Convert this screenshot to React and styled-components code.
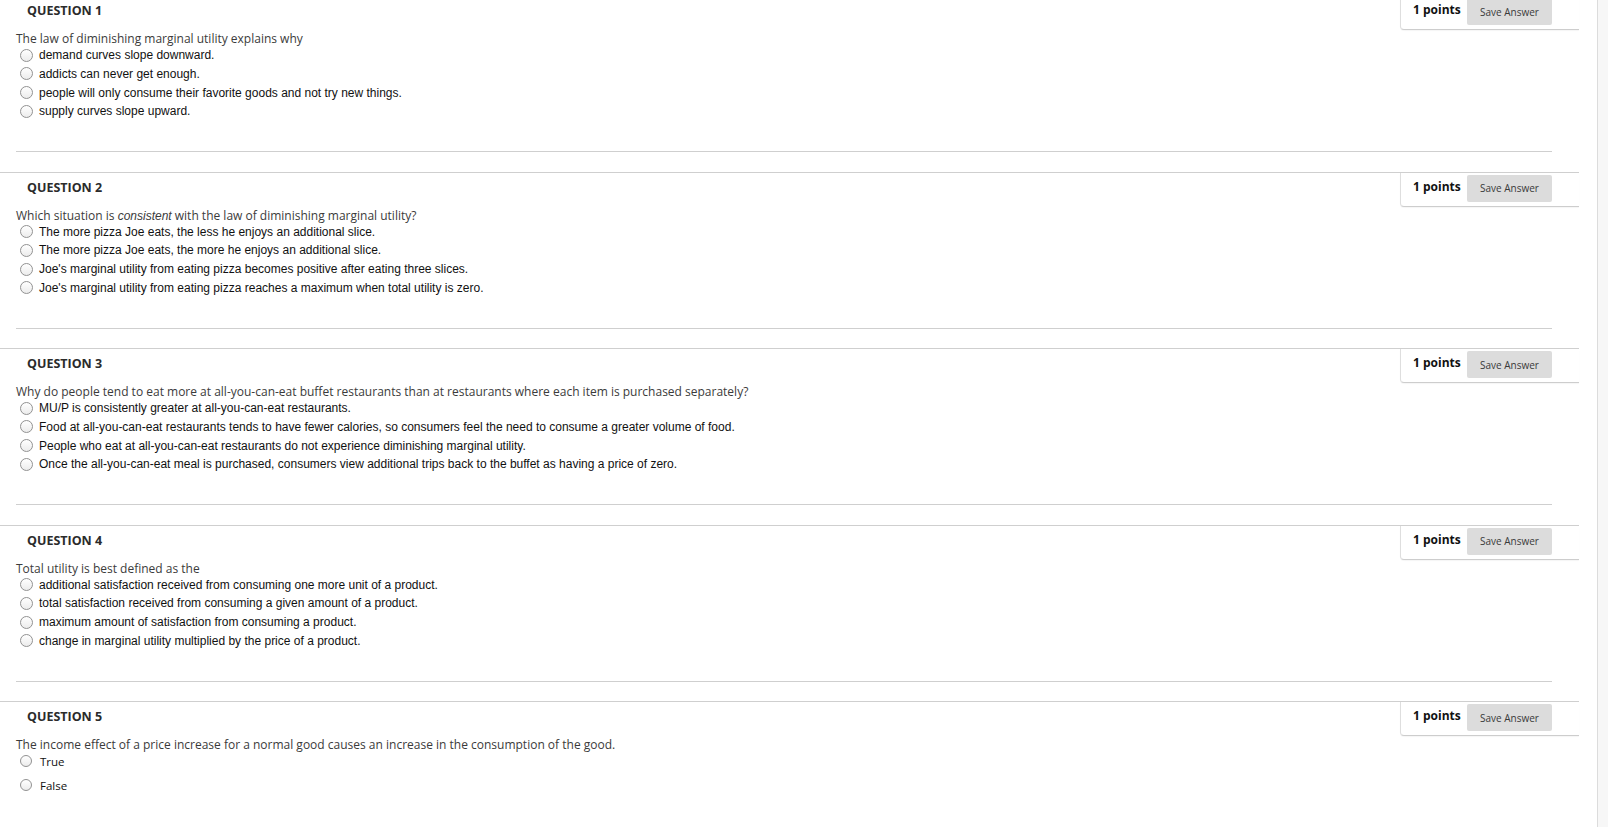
import styled, { createGlobalStyle } from "styled-components"

const Global = createGlobalStyle`
    html, body {
        margin: 0;
        padding: 0;
        background: #ffffff;
    }
    body {
        font-family: "Open Sans", "Liberation Sans", Arial, sans-serif;
        color: #333;
        overflow: hidden;
    }
`

const Pagina = styled.div`
    display: flex;
    min-height: 100vh;
`

const Contenido = styled.main`
    width: 1597px;
    flex: none;
    background: #fff;
    margin-top: -5px;
`

const Lateral = styled.aside`
    flex: 1;
    background: #f7f7f7;
    border-left: 1px solid #dcdcdc;
`

const Bloque = styled.section`
    display: flex;
    flex-direction: column;
`

const Cabecera = styled.div`
    width: 1579px;
    height: 35px;
    border-top: 1px solid #cfcfcf;
    display: flex;
    justify-content: space-between;
    align-items: flex-start;
`

const Titulo = styled.h3`
    margin: 0;
    padding-left: 27px;
    font-size: 12.5px;
    font-weight: 700;
    line-height: 29px;
    color: #2b2b2b;
`

const CajaPuntos = styled.div`
    width: 179px;
    height: 34px;
    padding: 2px 27px 0 12px;
    box-sizing: border-box;
    display: flex;
    align-items: flex-start;
    border-left: 1px solid #dedede;
    border-bottom: 1px solid #cdcdcd;
    border-bottom-left-radius: 4px;
    box-shadow: 0 1px 1px rgba(0, 0, 0, 0.04);
    background: #fff;
`

const Puntos = styled.span`
    font-size: 12px;
    font-weight: 700;
    line-height: 24px;
    color: #111;
    white-space: nowrap;
`

const BotonGuardar = styled.button`
    margin-left: auto;
    width: 85px;
    height: 27px;
    border: none;
    border-radius: 2px;
    background: #dcdcdc;
    font-family: "Open Sans", sans-serif;
    font-size: 10px;
    color: #3a3a3a;
    padding: 0;
    cursor: pointer;
`

const Cuerpo = styled.div`
    height: 119px;
    padding-top: 1px;
`

const Enunciado = styled.p`
    margin: 0;
    padding-left: 16px;
    font-size: 12px;
    line-height: 14px;
    color: #3b3b3b;

    em {
        font-family: "Liberation Sans", Arial, sans-serif;
        font-style: italic;
    }
`

const Opciones = styled.ul`
    list-style: none;
    margin: ${p => (p.$vf ? "-3px" : "0")} 0 0;
    padding: 0;
`

const Opcion = styled.li`
    display: flex;
    align-items: center;
    height: ${p => (p.$vf ? "24px" : "18.67px")};
    padding-left: 20px;
    gap: ${p => (p.$vf ? "8px" : "6px")};
    font-family: ${p => (p.$vf ? `"Open Sans", sans-serif` : `"Liberation Sans", Arial, sans-serif`)};
    font-size: ${p => (p.$vf ? "11.5px" : "12px")};
    color: #111;
`

const Radio = styled.span`
    flex: none;
    width: ${p => (p.$vf ? "10px" : "11px")};
    height: ${p => (p.$vf ? "10px" : "11px")};
    border-radius: 50%;
    border: 1px solid #929292;
    background: linear-gradient(#ffffff, #ececec);
`

const Separador = styled.hr`
    margin: 0 0 19.5px 16px;
    width: 1536px;
    height: 0;
    border: none;
    border-top: 1px solid #cfcfcf;
`

const preguntas = [
    {
        texto: "The law of diminishing marginal utility explains why",
        opciones: [
            "demand curves slope downward.",
            "addicts can never get enough.",
            "people will only consume their favorite goods and not try new things.",
            "supply curves slope upward.",
        ],
    },
    {
        texto: (
            <>
                Which situation is <em>consistent</em> with the law of diminishing marginal utility?
            </>
        ),
        opciones: [
            "The more pizza Joe eats, the less he enjoys an additional slice.",
            "The more pizza Joe eats, the more he enjoys an additional slice.",
            "Joe's marginal utility from eating pizza becomes positive after eating three slices.",
            "Joe's marginal utility from eating pizza reaches a maximum when total utility is zero.",
        ],
    },
    {
        texto: "Why do people tend to eat more at all-you-can-eat buffet restaurants than at restaurants where each item is purchased separately?",
        opciones: [
            "MU/P is consistently greater at all-you-can-eat restaurants.",
            "Food at all-you-can-eat restaurants tends to have fewer calories, so consumers feel the need to consume a greater volume of food.",
            "People who eat at all-you-can-eat restaurants do not experience diminishing marginal utility.",
            "Once the all-you-can-eat meal is purchased, consumers view additional trips back to the buffet as having a price of zero.",
        ],
    },
    {
        texto: "Total utility is best defined as the",
        opciones: [
            "additional satisfaction received from consuming one more unit of a product.",
            "total satisfaction received from consuming a given amount of a product.",
            "maximum amount of satisfaction from consuming a product.",
            "change in marginal utility multiplied by the price of a product.",
        ],
    },
    {
        texto: "The income effect of a price increase for a normal good causes an increase in the consumption of the good.",
        opciones: ["True", "False"],
        vf: true,
    },
]

const Pregunta = ({ numero, texto, opciones, vf }) => {
    return (
        <Bloque>
            <Cabecera>
                <Titulo>QUESTION {numero}</Titulo>
                <CajaPuntos>
                    <Puntos>1 points</Puntos>
                    <BotonGuardar>Save Answer</BotonGuardar>
                </CajaPuntos>
            </Cabecera>
            <Cuerpo>
                <Enunciado>{texto}</Enunciado>
                <Opciones $vf={vf}>
                    {opciones.map(op => (
                        <Opcion key={op} $vf={vf}>
                            <Radio $vf={vf} />
                            {op}
                        </Opcion>
                    ))}
                </Opciones>
            </Cuerpo>
            {!vf && <Separador />}
        </Bloque>
    )
}

const App = () => {
    return (
        <Pagina>
            <Global />
            <Contenido>
                {preguntas.map((p, i) => (
                    <Pregunta key={i} numero={i + 1} {...p} />
                ))}
            </Contenido>
            <Lateral />
        </Pagina>
    )
}

export default App
